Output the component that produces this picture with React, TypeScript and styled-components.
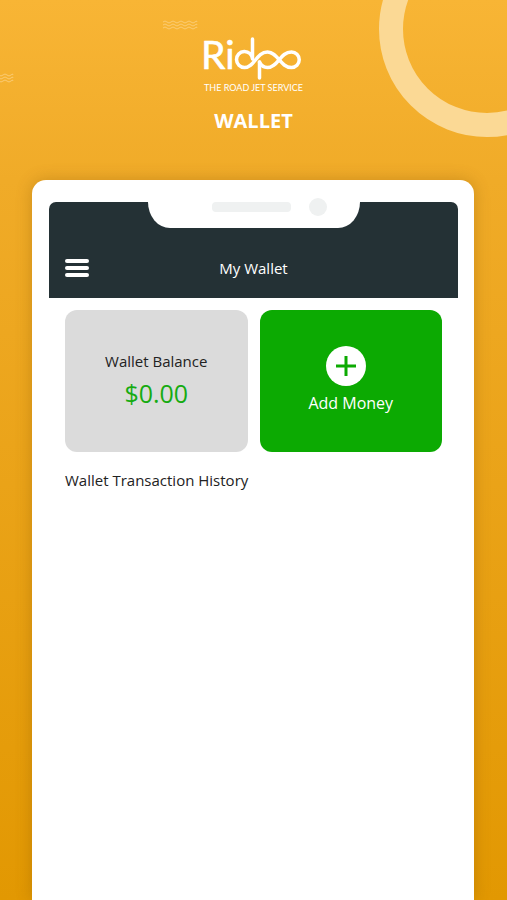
import React from "react";
import styled, { createGlobalStyle } from "styled-components";

const GlobalStyle = createGlobalStyle`
  *, *::before, *::after { box-sizing: border-box; }
  html, body, #root { margin: 0; min-height: 100%; }
  body { font-family: "Open Sans", "Noto Sans", sans-serif; background: #e29a02; }
  button { font: inherit; border: 0; padding: 0; cursor: pointer; }
`;

const Page = styled.main`
  position: relative;
  min-height: 100vh;
  display: flex;
  flex-direction: column;
  overflow: hidden;
  background: linear-gradient(180deg, #f8b535 0%, #f0ab28 20%, #e29802 100%);
`;

const Ring = styled.div`
  position: absolute;
  top: -79px;
  right: -88px;
  width: 216px;
  height: 216px;
  border: 24px solid #fbd995;
  border-radius: 50%;
`;

const Waves = styled.svg<{ $top: number; $left: number }>`
  position: absolute;
  top: ${(p) => p.$top}px;
  left: ${(p) => p.$left}px;
`;

const Brand = styled.header`
  position: relative;
  display: flex;
  flex-direction: column;
  align-items: center;
  padding-top: 34px;
  height: 180px;
  flex: none;
  color: #fff;
`;

const Logo = styled.svg`
  display: block;
  overflow: visible;
`;

const Tagline = styled.p`
  margin: 1px 0 0;
  font-family: Lato, sans-serif;
  font-size: 9px;
  line-height: 10px;
`;

const PageTitle = styled.h1`
  margin: 16px 0 0;
  font-size: 20px;
  line-height: 24px;
  font-weight: 700;
`;

const Phone = styled.section`
  position: relative;
  flex: 1;
  margin: 0 33px 0 32px;
  padding: 22px 16px 0 17px;
  background: #fff;
  border-radius: 14px 14px 0 0;
  box-shadow: 0 0 16px rgba(120, 75, 0, 0.3);
`;

const AppBar = styled.header`
  position: relative;
  height: 96px;
  padding: 36px 16px 0;
  display: grid;
  grid-template-columns: 24px 1fr 24px;
  align-items: center;
  background: #243135;
  border-radius: 7px 7px 0 0;
  color: #fff;
`;

const Notch = styled.div`
  position: absolute;
  top: 0;
  left: 50%;
  width: 212px;
  height: 26px;
  margin-left: -106px;
  padding-left: 32px;
  display: flex;
  align-items: flex-start;
  justify-content: center;
  gap: 18px;
  background: #fff;
  border-radius: 0 0 22px 22px / 0 0 26px 26px;
`;

const Speaker = styled.span`
  width: 79px;
  height: 10px;
  border-radius: 4px;
  background: #eff1f1;
`;

const Camera = styled.span`
  width: 18px;
  height: 18px;
  margin-top: -4px;
  border-radius: 50%;
  background: #eff1f1;
`;

const MenuButton = styled.button`
  display: grid;
  gap: 3px;
  background: none;
`;

const MenuBar = styled.span`
  height: 4px;
  border-radius: 2px;
  background: #fff;
`;

const BarTitle = styled.h2`
  margin: 0;
  text-align: center;
  font-size: 15px;
  line-height: 20px;
  font-weight: 400;
`;

const Content = styled.div`
  padding: 12px 16px;
`;

const Cards = styled.div`
  display: grid;
  grid-template-columns: 1fr 1fr;
  gap: 12px;
`;

const BalanceCard = styled.div`
  height: 142px;
  padding-top: 39px;
  text-align: center;
  border-radius: 12px;
  background: #dbdbdb;
`;

const Label = styled.p`
  margin: 0;
  font-size: 15px;
  line-height: 24px;
  color: #222;
`;

const Amount = styled.p`
  margin: 0;
  font-size: 25px;
  line-height: 40px;
  color: #16ab12;
`;

const AddCard = styled.button`
  height: 142px;
  display: flex;
  flex-direction: column;
  align-items: center;
  justify-content: flex-start;
  border-radius: 12px;
  background: #0caa02;
  color: #fff;
  && { padding: 35px 10px 0 0; }
`;

const AddLabel = styled.span`
  padding-left: 10px;
  font-size: 16px;
  line-height: 32px;
`;

const HistoryTitle = styled.h3`
  margin: 16px 0 0;
  font-size: 15px;
  line-height: 24px;
  font-weight: 400;
  color: #222;
`;

const WaveLines = ({ top, left }: { top: number; left: number }) => (
  <Waves $top={top} $left={left} width="36" height="12" viewBox="0 0 36 12" fill="none" stroke="#fbd083" aria-hidden="true">
    {[2, 5, 8].map((y) => (
      <path key={y} strokeWidth="0.8" d={`M1 ${y}q2 -2 4 0t4 0t4 0t4 0t4 0t4 0t4 0t4 0t2 0`} />
    ))}
  </Waves>
);

export default function App() {
  return (
    <>
      <GlobalStyle />
      <Page>
        <Ring />
        <WaveLines top={20} left={162} />
        <WaveLines top={73} left={-22} />
        <Brand>
          <Logo width="100" height="48" viewBox="204 34 100 48" role="img" aria-label="Ridpo">
            <text x="201" y="69" fontFamily="Lato, sans-serif" fontSize="39" fill="#fff" stroke="#fff" strokeWidth="0.6" strokeLinejoin="round">
              Ri
            </text>
            <g fill="none" stroke="#fff" strokeWidth="3.5" strokeLinecap="round" strokeLinejoin="round">
              <path d="M252.500 39V59A8 8 0 1 0 244.500 67.500C255 67.500 256 52 267.500 52C278 52 280 67.500 291.500 67.500A7.700 7.700 0 0 0 291.500 52C280 52 278 67.500 267.500 67.500Q262 67.500 259.500 62" />
              <path d="M259.500 78V62" />
            </g>
          </Logo>
          <Tagline>THE ROAD JET SERVICE</Tagline>
          <PageTitle>WALLET</PageTitle>
        </Brand>
        <Phone>
          <AppBar>
            <Notch>
              <Speaker />
              <Camera />
            </Notch>
            <MenuButton aria-label="Menu">
              <MenuBar />
              <MenuBar />
              <MenuBar />
            </MenuButton>
            <BarTitle>My Wallet</BarTitle>
          </AppBar>
          <Content>
            <Cards>
              <BalanceCard>
                <Label>Wallet Balance</Label>
                <Amount>$0.00</Amount>
              </BalanceCard>
              <AddCard>
                <svg width="42" height="42" viewBox="0 0 42 42" aria-hidden="true">
                  <circle cx="21" cy="21" r="20" fill="#fff" />
                  <path d="M21 11v20M11 21h20" stroke="#0caa02" strokeWidth="3" />
                </svg>
                <AddLabel>Add Money</AddLabel>
              </AddCard>
            </Cards>
            <HistoryTitle>Wallet Transaction History</HistoryTitle>
          </Content>
        </Phone>
      </Page>
    </>
  );
}
